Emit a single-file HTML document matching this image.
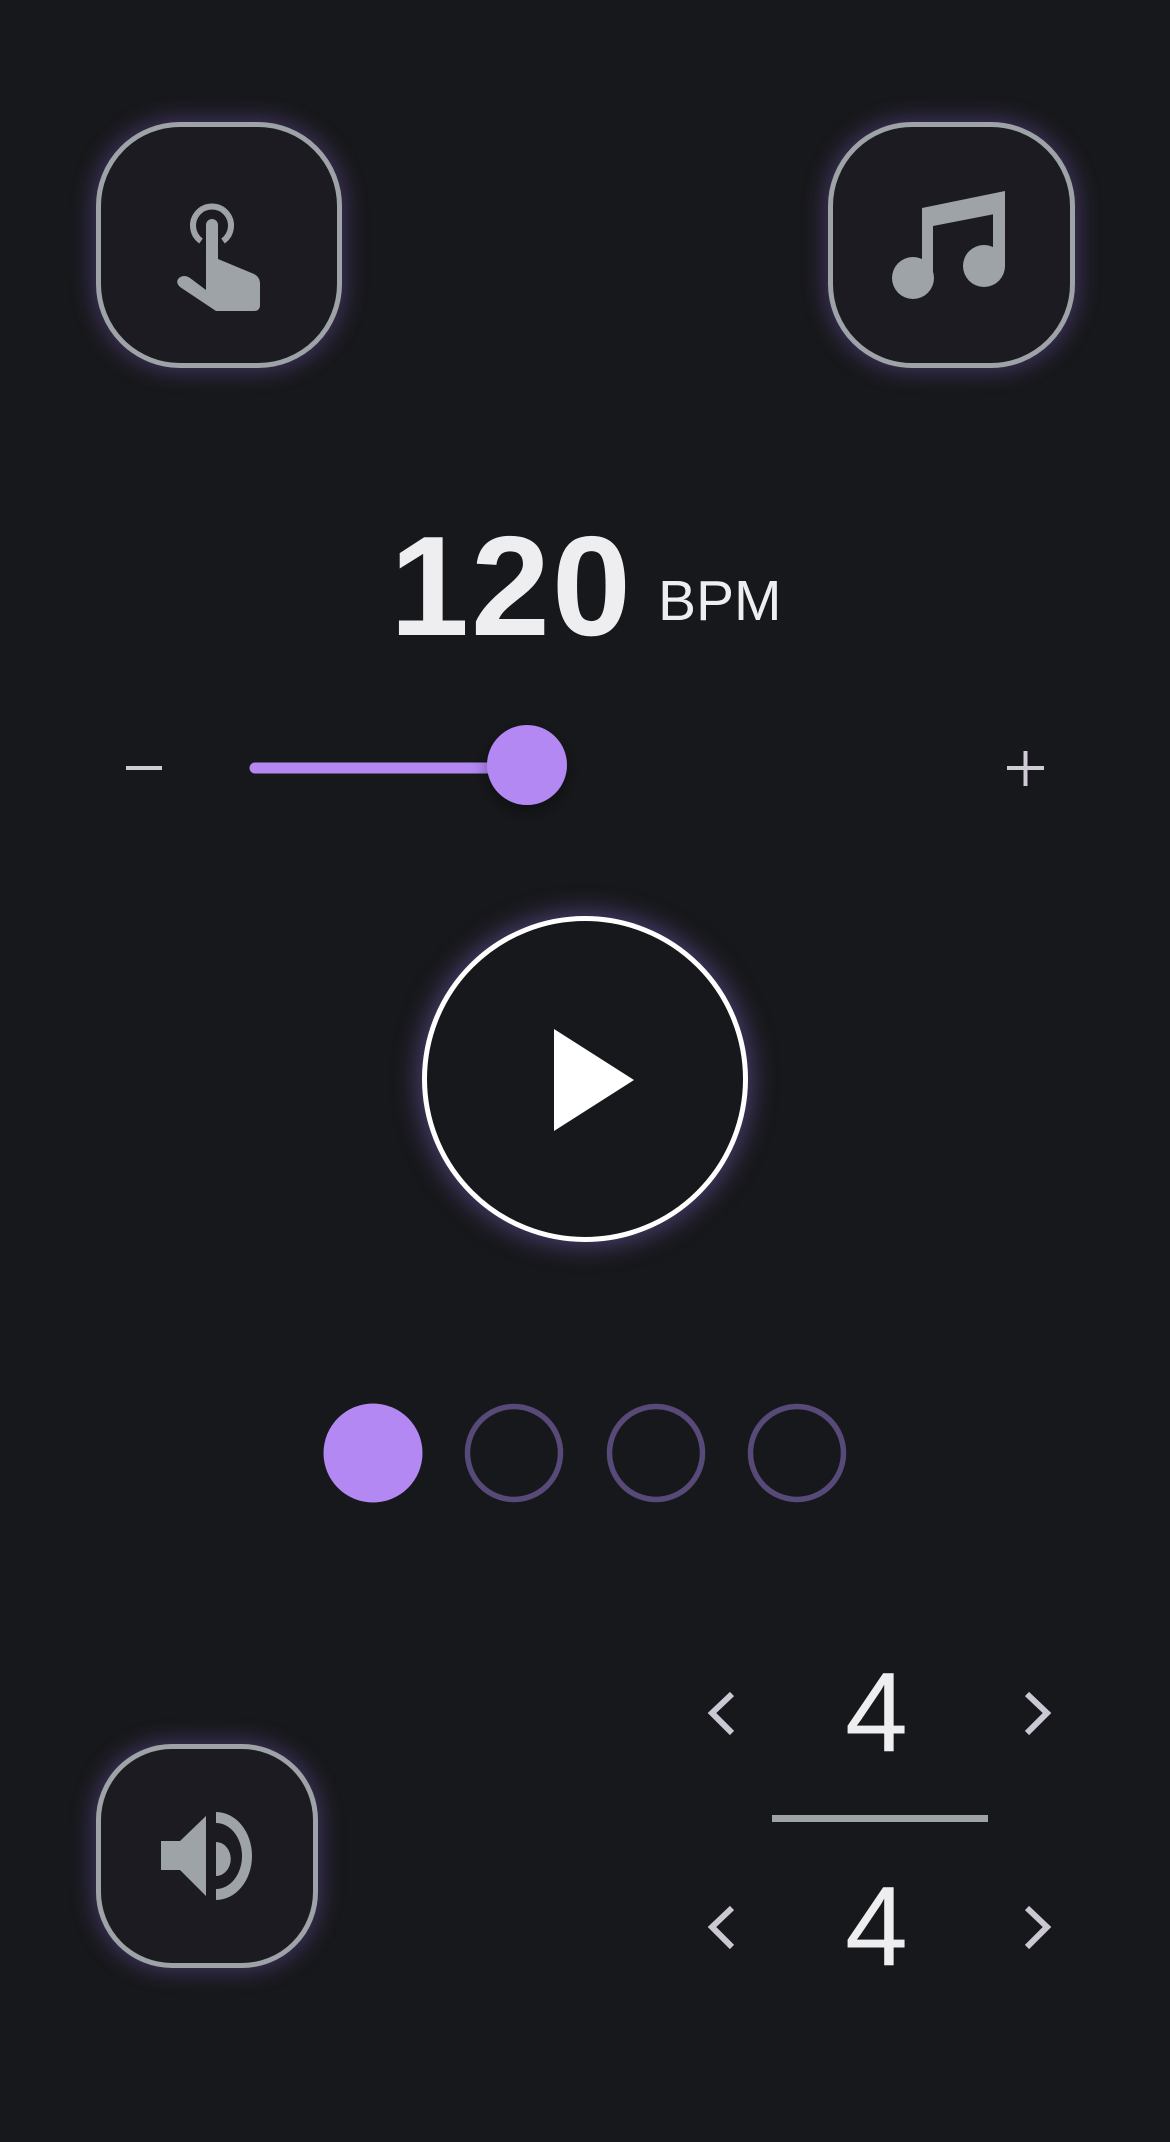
<!DOCTYPE html>
<html><head><meta charset="utf-8"><style>
html,body{margin:0;padding:0;background:#17181b;width:1170px;height:2142px;overflow:hidden;font-family:"Liberation Sans",sans-serif;}
.btn{position:absolute;box-sizing:border-box;border:5px solid #9ea3a8;background:#1c1b21;box-shadow:0 0 22px 4px rgba(110,85,170,0.45);}
.t{position:absolute;color:#eeeef0;white-space:nowrap;}
</style></head><body>
<div class="btn" style="left:96px;top:122px;width:246px;height:246px;border-radius:84px"></div>
<div class="btn" style="left:828px;top:122px;width:247px;height:246px;border-radius:84px"></div>
<div class="btn" style="left:96px;top:1744px;width:222px;height:224px;border-radius:76px"></div>
<div style="position:absolute;left:422px;top:916px;width:326px;height:326px;box-sizing:border-box;border-radius:50%;border:5px solid #fff;background:#17181b;box-shadow:0 0 24px 5px rgba(120,95,185,0.5)"></div>
<div class="t" style="left:390px;top:507px;font-size:142px;font-weight:bold;line-height:160px;letter-spacing:2px">120</div>
<div class="t" style="left:658px;top:566px;font-size:57px;line-height:70px">BPM</div>
<div class="t" style="left:845px;top:1647px;font-size:113px;line-height:130px">4</div>
<div class="t" style="left:845px;top:1861px;font-size:113px;line-height:130px">4</div>
<svg width="1170" height="2142" style="position:absolute;left:0;top:0">
<defs><filter id="sh" x="-50%" y="-50%" width="200%" height="200%"><feDropShadow dx="0" dy="6" stdDeviation="8" flood-color="#000" flood-opacity="0.4"/></filter></defs>
<g fill="#9ea3a8">
<path d="M201 241 A19 19 0 1 1 223 241" fill="none" stroke="#9ea3a8" stroke-width="6"/>
<rect x="206" y="219" width="12" height="72" rx="6"/>
<path d="M206 254 L254 274 Q260 277 260 284 L260 305 Q260 311 254 311 L216 311 L180 287 Q175 282 179 278 Q184 274 190 278 L206 290 Z"/>
<circle cx="913" cy="278" r="21"/>
<rect x="922" y="208" width="11" height="72"/>
<path d="M922 208 L1005 191 L1005 212 L933 226 Z"/>
<rect x="993" y="195" width="12" height="72"/>
<circle cx="984" cy="266" r="21"/>
<path d="M161 1841 L180 1841 L206 1816 L206 1896 L180 1870 L161 1870 Z"/>
<path d="M216 1842 A13 15 0 0 1 216 1876 Z"/>
<path d="M216 1812 A36 44 0 0 1 216 1900 L216 1889 A26 33 0 0 0 216 1823 Z"/>
</g>
<line x1="126" y1="768" x2="162" y2="768" stroke="#cfccd6" stroke-width="4"/>
<line x1="1007" y1="768" x2="1044" y2="768" stroke="#cfccd6" stroke-width="4"/>
<line x1="1025.5" y1="751" x2="1025.5" y2="786" stroke="#cfccd6" stroke-width="4"/>
<line x1="255" y1="768" x2="520" y2="768" stroke="#b388f3" stroke-width="11" stroke-linecap="round"/>
<circle cx="527" cy="765" r="40" fill="#b388f3" filter="url(#sh)"/>
<path d="M554 1029 L634 1080 L554 1131 Z" fill="#fff"/>
<circle cx="373" cy="1453" r="49.5" fill="#b388f3"/>
<circle cx="514" cy="1453" r="46.5" fill="none" stroke="#574a78" stroke-width="5.5"/>
<circle cx="656" cy="1453" r="46.5" fill="none" stroke="#574a78" stroke-width="5.5"/>
<circle cx="797" cy="1453" r="46.5" fill="none" stroke="#574a78" stroke-width="5.5"/>
<rect x="772" y="1815" width="216" height="7" fill="#9ea3a8"/>
<g fill="none" stroke="#cbc7d3" stroke-width="6">
<path d="M732 1694 L712 1713 L732 1733"/>
<path d="M1027 1694 L1047 1713 L1027 1733"/>
<path d="M732 1908 L712 1927 L732 1947"/>
<path d="M1027 1908 L1047 1927 L1027 1947"/>
</g>
</svg>
</body></html>
